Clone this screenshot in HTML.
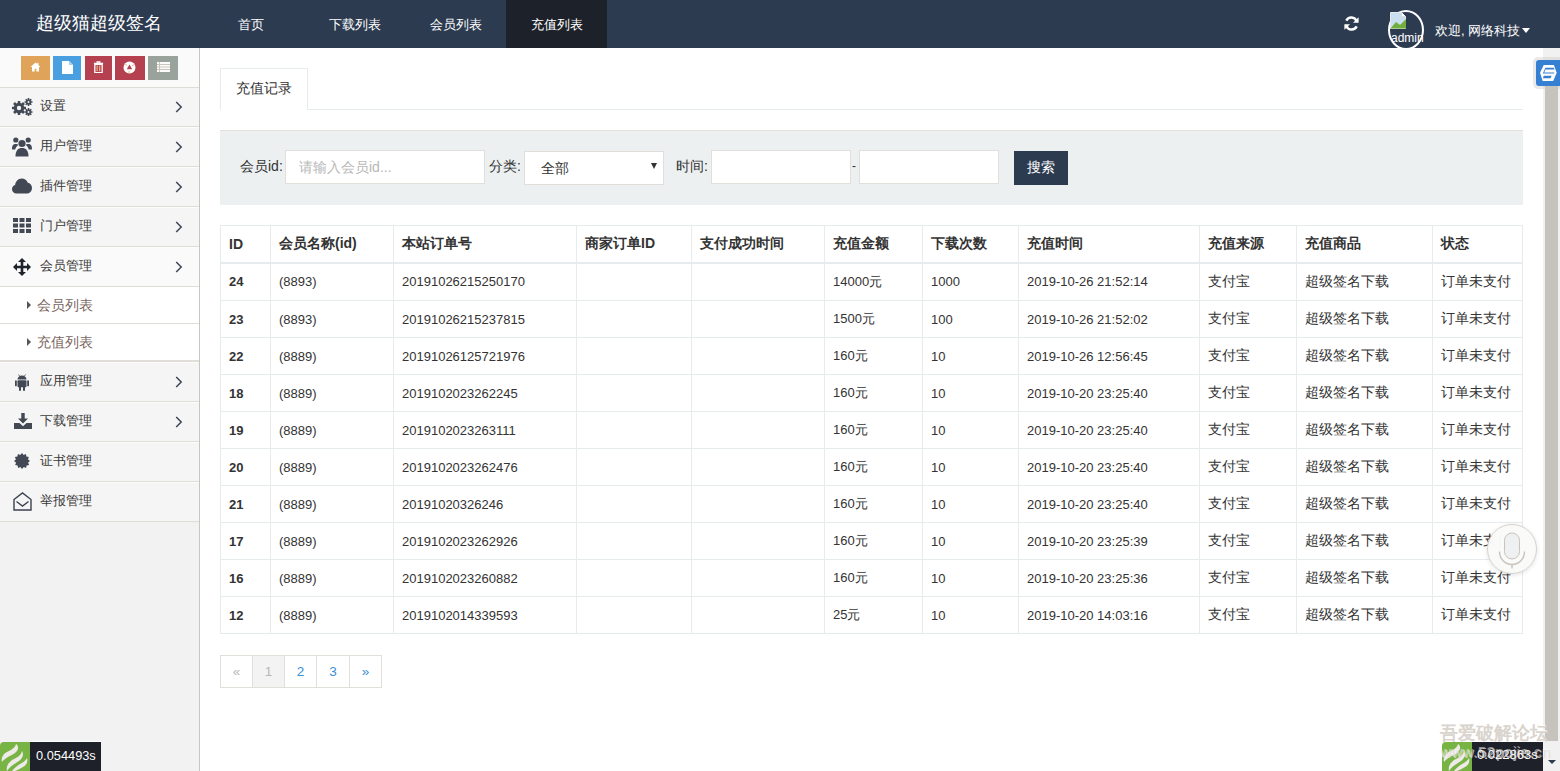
<!DOCTYPE html>
<html><head><meta charset="utf-8">
<style>
*{box-sizing:border-box;margin:0;padding:0}
html,body{width:1560px;height:771px;overflow:hidden;background:#fff;font-family:"Liberation Sans",sans-serif;color:#333;font-size:14px}
.abs{position:absolute}
#hd{position:absolute;left:0;top:0;width:1560px;height:48px;background:#2d3b51;color:#fff}
#hd .logo{position:absolute;left:36px;top:10px;font-size:18px;line-height:26px;white-space:nowrap}
#hd .nav{position:absolute;top:0;height:48px;line-height:50px;overflow:hidden;font-size:13px;white-space:nowrap}
#hd .act{background:#1d2129}
#sb{position:absolute;left:0;top:48px;width:200px;height:723px;background:#f2f2f2;border-right:1px solid #c9c5bf}
#short{position:absolute;left:0;top:0;width:199px;height:40px;background:#fafafa;border-bottom:1px solid #e0ddd8;z-index:2}
.sbtn{position:absolute;top:8px;height:24px}
.mi{position:absolute;left:0;width:199px;height:40px;border-top:1px solid #fcfcfc;border-bottom:1px solid #e0ddd8;background:#f5f5f5}
.mi .t{position:absolute;left:40px;top:1px;line-height:34px;font-size:13px;color:#393939;white-space:nowrap}
.mi .ar{position:absolute;left:175px;top:13px}
.mi svg.ic{position:absolute}
.sub{position:absolute;left:0;width:199px;height:37px;border-bottom:1px solid #e0ddd8;background:#fff}
.sub .t{position:absolute;left:37px;top:0px;line-height:36px;font-size:14px;color:#7a6660;white-space:nowrap}
.sub .tri{position:absolute;left:27px;top:14px;width:0;height:0;border-left:4px solid #555;border-top:4px solid transparent;border-bottom:4px solid transparent}
#ct{position:absolute;left:200px;top:48px;width:1343px;height:723px;background:#fff}
#scr{position:absolute;left:1543px;top:48px;width:17px;height:723px;background:#f1f1f1}
#thumb{position:absolute;left:2px;top:17px;width:13px;height:676px;background:#c6c3be}
table{border-collapse:collapse;position:absolute;left:220px;top:225px;table-layout:fixed}
td,th{border:1px solid #e6ecee;padding:0 8px;height:37px;text-align:left;white-space:nowrap;font-size:13px;color:#333}
th{font-weight:bold;height:37px;border-bottom:2px solid #e6ecee;font-size:14px}
td.c{font-size:14px}
td.b{font-weight:bold}
.lbl{font-size:14px;line-height:20px;color:#333;white-space:nowrap}
.inp{background:#fff;border:1px solid #e2ded9}
.pg{position:absolute;top:655px;height:33px;border:1px solid #e2ded9;font-size:13.5px;line-height:31px;text-align:center;color:#3a8fd6;background:#fff}
</style></head><body>
<div id="hd">
  <div class="logo">超级猫超级签名</div>
  <div class="nav" style="left:212px;width:77px;text-align:center">首页</div>
  <div class="nav" style="left:304px;width:102px;text-align:center">下载列表</div>
  <div class="nav" style="left:405px;width:101px;text-align:center">会员列表</div>
  <div class="nav act" style="left:506px;width:101px;text-align:center">充值列表</div>

  <svg class="abs" style="left:1344px;top:16px" width="15" height="15" viewBox="0 0 15 15"><path d="M12.6 5.2A5.6 5.6 0 0 0 2.3 4.6" fill="none" stroke="#fff" stroke-width="2.4"/><path d="M14.6 1.2v5.6H9z" fill="#fff"/><path d="M2.4 9.8A5.6 5.6 0 0 0 12.7 10.4" fill="none" stroke="#fff" stroke-width="2.4"/><path d="M0.4 13.8V8.2H6z" fill="#fff"/></svg>
  <div class="abs" style="left:1388px;top:10px;width:36px;height:40px;border:2px solid #fff;border-radius:50%;overflow:hidden"></div>
  <svg class="abs" style="left:1390px;top:12px" width="17" height="17" viewBox="0 0 17 17"><path d="M0.5 0.5h11l4 4v12h-15z" fill="#c9dff0" stroke="#e8e8e8"/><path d="M0.5 16.5L6 10l4 3 6-6v9.5z" fill="#6fae3c"/><path d="M11.5 0.5v4h4" fill="#fff" stroke="#ddd"/></svg>
  <div class="abs" style="left:1391px;top:30px;width:33px;overflow:hidden;font-size:12px;line-height:16px;color:#fff;white-space:nowrap">admin</div>
  <div class="abs" style="left:1435px;top:21px;font-size:13px;line-height:20px;color:#fff;white-space:nowrap">欢迎, 网络科技</div>
  <div class="abs" style="left:1522px;top:28px;width:0;height:0;border-left:4px solid transparent;border-right:4px solid transparent;border-top:5px solid #fff"></div>
</div>
<div id="sb">
  <div id="short">
    <div class="sbtn" style="left:21px;width:29px;background:#e0a35a"></div>
    <div class="sbtn" style="left:53px;width:28px;background:#4a9fe0"></div>
    <div class="sbtn" style="left:85px;width:27px;background:#b5404f"></div>
    <div class="sbtn" style="left:115px;width:30px;background:#b5404f"></div>
    <div class="sbtn" style="left:148px;width:30px;background:#9aa39b"></div>

    <svg class="abs" style="left:30px;top:14px" width="11" height="10" viewBox="0 0 13 12"><path d="M6.5 0.5L0.5 6h1.8v5.5h3.2V8h2v3.5h3.2V6h1.8L10 3.7V1H8.5v1.3z" fill="#fff"/></svg>
    <svg class="abs" style="left:62px;top:13px" width="11" height="13" viewBox="0 0 11 13"><path d="M0 0h7l4 4v9H0z" fill="#fff"/><path d="M7 0v4h4" fill="#a8d0f0"/></svg>
    <svg class="abs" style="left:93px;top:13px" width="11" height="12" viewBox="0 0 11 13"><path d="M0.5 2.5h10M4 2.5V1h3v1.5" fill="none" stroke="#fff" stroke-width="1.3"/><path d="M1.5 3.5h8v9h-8z" fill="none" stroke="#fff" stroke-width="1.4"/><path d="M4 5v6M6.8 5v6" stroke="#e8c090" stroke-width="1.2"/></svg>
    <svg class="abs" style="left:123px;top:13px" width="13" height="13" viewBox="0 0 13 13"><circle cx="6.5" cy="6.5" r="6" fill="#fff"/><path d="M6.5 3.6L9.2 8.3H3.8z" fill="#b5404f"/><path d="M2 3l2 1.5M11 3.5L9 5M6 12.5V10" stroke="#e8b080" stroke-width="0.9"/></svg>
    <svg class="abs" style="left:157px;top:14px" width="13" height="10" viewBox="0 0 13 10"><rect x="0" y="0" width="13" height="10" fill="#fbfbfb"/><path d="M0 2.5h13M0 5h13M0 7.5h13M2.5 0v10" stroke="#c5bfb6" stroke-width="0.9"/></svg>
  </div>
<div class="mi" style="top:39px"><svg class="ic" style="left:12px;top:10px" width="21" height="18" viewBox="0 0 21 18"><g fill="#424854"><circle cx="7" cy="10" r="5.2"/><g stroke="#424854" stroke-width="2.6"><path d="M7 3v14M0 10h14M2 5l10 10M12 5L2 15"/></g><circle cx="16.5" cy="4" r="2.6"/><g stroke="#424854" stroke-width="1.6"><path d="M16.5 0v8M12.5 4h8M13.7 1.2l5.6 5.6M19.3 1.2l-5.6 5.6"/></g><circle cx="16.5" cy="14" r="2.6"/><g stroke="#424854" stroke-width="1.6"><path d="M16.5 10v8M12.5 14h8M13.7 11.2l5.6 5.6M19.3 11.2l-5.6 5.6"/></g></g><circle cx="7" cy="10" r="2.2" fill="#f2f2f2"/><circle cx="16.5" cy="4" r="1" fill="#f2f2f2"/><circle cx="16.5" cy="14" r="1" fill="#f2f2f2"/></svg><div class="t">设置</div><svg class="ar" width="8" height="12" viewBox="0 0 8 12"><path d="M1.2 1l5 5-5 5" fill="none" stroke="#3b4656" stroke-width="1.5"/></svg></div>
<div class="mi" style="top:79px"><svg class="ic" style="left:12px;top:9px" width="20" height="20" viewBox="0 0 20 20"><g fill="#424854"><circle cx="10" cy="6.5" r="3.6"/><path d="M3.5 19.5c0-6 2.5-8.5 6.5-8.5s6.5 2.5 6.5 8.5z"/><circle cx="3.8" cy="3" r="2.6"/><circle cx="16.2" cy="3" r="2.6"/><path d="M0 12.5c0-4 1-5.5 3.8-5.5 1.2 0 2 .4 2.6 1-1.6 1-2.8 2.6-3.2 4.5z"/><path d="M20 12.5c0-4-1-5.5-3.8-5.5-1.2 0-2 .4-2.6 1 1.6 1 2.8 2.6 3.2 4.5z"/></g></svg><div class="t">用户管理</div><svg class="ar" width="8" height="12" viewBox="0 0 8 12"><path d="M1.2 1l5 5-5 5" fill="none" stroke="#3b4656" stroke-width="1.5"/></svg></div>
<div class="mi" style="top:119px"><svg class="ic" style="left:12px;top:10px" width="20" height="16" viewBox="0 0 20 16"><path fill="#424854" d="M4.5 15.5C2 15.5 0 13.6 0 11.2c0-2 1.3-3.6 3.1-4.1C3.4 3.4 6.2 0.5 9.8 0.5c2.8 0 5.1 1.8 6 4.3 2.4 0.4 4.2 2.6 4.2 5.1 0 3.1-2.5 5.6-5.6 5.6z"/></svg><div class="t">插件管理</div><svg class="ar" width="8" height="12" viewBox="0 0 8 12"><path d="M1.2 1l5 5-5 5" fill="none" stroke="#3b4656" stroke-width="1.5"/></svg></div>
<div class="mi" style="top:159px"><svg class="ic" style="left:13px;top:10px" width="18" height="15" viewBox="0 0 18 15"><g fill="#424854"><rect x="0" y="0" width="5" height="4"/><rect x="6.5" y="0" width="5" height="4"/><rect x="13" y="0" width="5" height="4"/><rect x="0" y="5.5" width="5" height="4"/><rect x="6.5" y="5.5" width="5" height="4"/><rect x="13" y="5.5" width="5" height="4"/><rect x="0" y="11" width="5" height="4"/><rect x="6.5" y="11" width="5" height="4"/><rect x="13" y="11" width="5" height="4"/></g></svg><div class="t">门户管理</div><svg class="ar" width="8" height="12" viewBox="0 0 8 12"><path d="M1.2 1l5 5-5 5" fill="none" stroke="#3b4656" stroke-width="1.5"/></svg></div>
<div class="mi" style="top:199px;background:#fafafa"><svg class="ic" style="left:13px;top:10px" width="18" height="18" viewBox="0 0 18 18"><g fill="#1f232b"><path d="M9 0l4 4H10.3v3.7H14V5l4 4-4 4v-2.7h-3.7V14H13l-4 4-4-4h2.7v-3.7H4V13L0 9l4-4v2.7h3.7V4H5z"/></g></svg><div class="t">会员管理</div><svg class="ar" width="8" height="12" viewBox="0 0 8 12"><path d="M1.2 1l5 5-5 5" fill="none" stroke="#3b4656" stroke-width="1.5"/></svg></div>
<div class="sub" style="top:239px"><div class="tri"></div><div class="t">会员列表</div></div>
<div class="sub" style="top:276px"><div class="tri"></div><div class="t">充值列表</div></div>
<div class="mi" style="top:314px"><svg class="ic" style="left:15px;top:11px" width="14" height="17" viewBox="0 0 14 17"><g fill="#424854"><path d="M2.5 5.5a4.5 4 0 0 1 9 0z"/><rect x="2.5" y="6.3" width="9" height="7" rx="1"/><rect x="0" y="6.3" width="1.8" height="6" rx=".9"/><rect x="12.2" y="6.3" width="1.8" height="6" rx=".9"/><rect x="4" y="12" width="2" height="5" rx="1"/><rect x="8" y="12" width="2" height="5" rx="1"/><path d="M3.5 0.5l1.5 2.2M10.5 0.5L9 2.7" stroke="#424854" stroke-width=".8"/></g></svg><div class="t">应用管理</div><svg class="ar" width="8" height="12" viewBox="0 0 8 12"><path d="M1.2 1l5 5-5 5" fill="none" stroke="#3b4656" stroke-width="1.5"/></svg></div>
<div class="mi" style="top:354px"><svg class="ic" style="left:14px;top:10px" width="18" height="16" viewBox="0 0 18 16"><g fill="#424854"><path d="M7.3 0h3.4v5.5H14L9 10.5 4 5.5h3.3z"/><path d="M0 10h5.5L9 13.2 12.5 10H18v6H0z"/></g></svg><div class="t">下载管理</div><svg class="ar" width="8" height="12" viewBox="0 0 8 12"><path d="M1.2 1l5 5-5 5" fill="none" stroke="#3b4656" stroke-width="1.5"/></svg></div>
<div class="mi" style="top:394px"><svg class="ic" style="left:14px;top:10px" width="16" height="16" viewBox="0 0 16 16"><path fill="#424854" d="M8 0l1.6 1.9 2.3-1 .5 2.5 2.5.5-1 2.3L16 8l-1.9 1.6 1 2.3-2.5.5-.5 2.5-2.3-1L8 16l-1.6-1.9-2.3 1-.5-2.5-2.5-.5 1-2.3L0 8l1.9-1.6-1-2.3 2.5-.5.5-2.5 2.3 1z"/></svg><div class="t">证书管理</div></div>
<div class="mi" style="top:434px"><svg class="ic" style="left:13px;top:9px" width="19" height="19" viewBox="0 0 19 19"><g fill="none" stroke="#3a4150" stroke-width="1.4"><path d="M1 7.5L9.5 0.9 18 7.5V18H1z"/><path d="M3.5 9.5l6 4.5 6-4.5"/></g></svg><div class="t">举报管理</div></div>
<div class="abs" style="left:0;top:313px;width:199px;height:1px;background:#e0ddd8"></div>
</div>
<div id="ct"></div>

<div class="abs" style="left:220px;top:109px;width:1303px;height:1px;background:#e6ecee"></div>
<div class="abs" style="left:220px;top:68px;width:88px;height:42px;border:1px solid #e6ecee;border-bottom:none;background:#fff"></div>
<div class="abs" style="left:236px;top:78px;font-size:14px;line-height:20px;color:#333;white-space:nowrap">充值记录</div>
<div class="abs" style="left:220px;top:130px;width:1303px;height:75px;background:#ecf0f1;border-top:1px solid #e4e1dc"></div>
<div class="abs lbl" style="left:240px;top:156px">会员id:</div>
<div class="abs inp" style="left:285px;top:150px;width:200px;height:34px"></div>
<div class="abs" style="left:299px;top:157px;font-size:14px;line-height:20px;color:#b8b8b8;white-space:nowrap">请输入会员id...</div>
<div class="abs lbl" style="left:489px;top:156px">分类:</div>
<div class="abs inp" style="left:524px;top:151px;width:140px;height:34px"></div>
<div class="abs" style="left:541px;top:158px;font-size:14px;line-height:20px;color:#333;white-space:nowrap">全部</div>
<div class="abs" style="left:651px;top:163px;width:0;height:0;border-left:3px solid transparent;border-right:3px solid transparent;border-top:6px solid #333"></div>
<div class="abs lbl" style="left:676px;top:156px">时间:</div>
<div class="abs inp" style="left:711px;top:150px;width:140px;height:34px"></div>
<div class="abs" style="left:852px;top:156px;font-size:12px;line-height:20px;color:#333">-</div>
<div class="abs inp" style="left:859px;top:150px;width:140px;height:34px"></div>
<div class="abs" style="left:1014px;top:151px;width:54px;height:34px;background:#2d3b51;color:#fff;font-size:14px;line-height:32px;text-align:center">搜索</div>
<table><colgroup><col style="width:50px"><col style="width:123px"><col style="width:183px"><col style="width:115px"><col style="width:133px"><col style="width:98px"><col style="width:96px"><col style="width:181px"><col style="width:97px"><col style="width:136px"><col style="width:90px"></colgroup>
<tr><th>ID</th><th>会员名称(id)</th><th>本站订单号</th><th>商家订单ID</th><th>支付成功时间</th><th>充值金额</th><th>下载次数</th><th>充值时间</th><th>充值来源</th><th>充值商品</th><th>状态</th></tr>
<tr style="height:38px"><td class="b" style="height:38px">24</td><td>(8893)</td><td>20191026215250170</td><td></td><td></td><td>14000元</td><td>1000</td><td>2019-10-26 21:52:14</td><td class="c">支付宝</td><td class="c">超级签名下载</td><td class="c">订单未支付</td></tr>
<tr><td class="b">23</td><td>(8893)</td><td>20191026215237815</td><td></td><td></td><td>1500元</td><td>100</td><td>2019-10-26 21:52:02</td><td class="c">支付宝</td><td class="c">超级签名下载</td><td class="c">订单未支付</td></tr>
<tr><td class="b">22</td><td>(8889)</td><td>20191026125721976</td><td></td><td></td><td>160元</td><td>10</td><td>2019-10-26 12:56:45</td><td class="c">支付宝</td><td class="c">超级签名下载</td><td class="c">订单未支付</td></tr>
<tr><td class="b">18</td><td>(8889)</td><td>2019102023262245</td><td></td><td></td><td>160元</td><td>10</td><td>2019-10-20 23:25:40</td><td class="c">支付宝</td><td class="c">超级签名下载</td><td class="c">订单未支付</td></tr>
<tr><td class="b">19</td><td>(8889)</td><td>2019102023263111</td><td></td><td></td><td>160元</td><td>10</td><td>2019-10-20 23:25:40</td><td class="c">支付宝</td><td class="c">超级签名下载</td><td class="c">订单未支付</td></tr>
<tr><td class="b">20</td><td>(8889)</td><td>2019102023262476</td><td></td><td></td><td>160元</td><td>10</td><td>2019-10-20 23:25:40</td><td class="c">支付宝</td><td class="c">超级签名下载</td><td class="c">订单未支付</td></tr>
<tr><td class="b">21</td><td>(8889)</td><td>20191020326246</td><td></td><td></td><td>160元</td><td>10</td><td>2019-10-20 23:25:40</td><td class="c">支付宝</td><td class="c">超级签名下载</td><td class="c">订单未支付</td></tr>
<tr><td class="b">17</td><td>(8889)</td><td>2019102023262926</td><td></td><td></td><td>160元</td><td>10</td><td>2019-10-20 23:25:39</td><td class="c">支付宝</td><td class="c">超级签名下载</td><td class="c">订单未支付</td></tr>
<tr><td class="b">16</td><td>(8889)</td><td>2019102023260882</td><td></td><td></td><td>160元</td><td>10</td><td>2019-10-20 23:25:36</td><td class="c">支付宝</td><td class="c">超级签名下载</td><td class="c">订单未支付</td></tr>
<tr><td class="b">12</td><td>(8889)</td><td>2019102014339593</td><td></td><td></td><td>25元</td><td>10</td><td>2019-10-20 14:03:16</td><td class="c">支付宝</td><td class="c">超级签名下载</td><td class="c">订单未支付</td></tr>
</table>
<div class="pg" style="left:220px;width:33px;color:#b8b8b8">«</div>
<div class="pg" style="left:252px;width:33px;color:#b8b8b8;background:#f3f3f3">1</div>
<div class="pg" style="left:284px;width:33px">2</div>
<div class="pg" style="left:316px;width:34px">3</div>
<div class="pg" style="left:349px;width:33px">»</div>

<div id="scr"><div id="thumb"></div></div>

<div class="abs" style="left:1533px;top:57px;width:30px;height:32px;border-radius:5px;background:rgba(200,195,188,0.35)"></div>
<svg class="abs" style="left:1536px;top:60px" width="24" height="26" viewBox="0 0 24 26"><rect x="0" y="0" width="30" height="26" rx="3" fill="#3580d2"/><path d="M7.75 5H17.9L20.7 12.8 17.2 20.9H6.7L4 12.8z" fill="#fff"/><path d="M9.4 7.7H17.8L18.6 9.6H9.4L8.2 12.4H18.4L18 13.4H6.8z" fill="#3580d2"/><path d="M7.8 15.8H15.6L14.6 18.2H6.9z" fill="#3580d2"/></svg>
<div class="abs" style="left:1487px;top:524px;width:50px;height:50px;border-radius:50%;background:rgba(250,250,249,0.98);border:1px solid #d6d2cc;box-shadow:0 1px 4px rgba(0,0,0,0.12)"></div>
<svg class="abs" style="left:1497px;top:532px" width="30" height="38" viewBox="0 0 30 38"><rect x="7.5" y="1" width="15" height="26" rx="7.5" fill="#eef0f1" stroke="#c8c3bc" stroke-width="1"/><path d="M2.5 19.5c0 7.5 5.5 13 12.5 13s12.5-5.5 12.5-13" fill="none" stroke="#c8c3bc" stroke-width="1.4"/><path d="M15 32.5v4" stroke="#c8c3bc" stroke-width="1.4"/></svg>
<div class="abs" style="left:0;top:742px;width:31px;height:29px;background:#78b443;border-top-left-radius:4px"></div>
<svg class="abs" style="left:0;top:744px" width="30" height="27" viewBox="0 0 30 27"><g fill="#eeeae8"><path d="M16 0c3 2 3 6-1 9-4 3-9 4-13 9-1-4 1-8 5-10 4-2 8-4 9-8z"/><path d="M22 7c2 3 1 7-3 10-4 3-8 4-12 10-1-4 1-8 5-11 4-2 9-4 10-9z"/><path d="M27 14c1 3 0 7-4 9-3 2-6 3-8 4h-3c2-3 5-5 8-7 4-2 6-4 7-6z"/></g></svg>
<div class="abs" style="left:30px;top:741px;width:71px;height:30px;background:#1e2129;border-top:1px solid #fff"></div>
<div class="abs" style="left:36px;top:746px;font-size:12.8px;line-height:20px;color:#fff;white-space:nowrap">0.054493s</div>
<div class="abs" style="left:1442px;top:742px;width:31px;height:29px;background:#78b443;border-top-left-radius:4px"></div>
<svg class="abs" style="left:1442px;top:744px" width="30" height="27" viewBox="0 0 30 27"><g fill="#eeeae8"><path d="M16 0c3 2 3 6-1 9-4 3-9 4-13 9-1-4 1-8 5-10 4-2 8-4 9-8z"/><path d="M22 7c2 3 1 7-3 10-4 3-8 4-12 10-1-4 1-8 5-11 4-2 9-4 10-9z"/><path d="M27 14c1 3 0 7-4 9-3 2-6 3-8 4h-3c2-3 5-5 8-7 4-2 6-4 7-6z"/></g></svg>
<div class="abs" style="left:1472px;top:741px;width:71px;height:30px;background:#1e2129;border-top:1px solid #fff"></div>
<div class="abs" style="left:1477px;top:745px;font-size:13px;line-height:20px;color:#fff;white-space:nowrap">0.022863s</div>
<div class="abs" style="left:1548px;top:760px;width:0;height:0;border-left:4px solid transparent;border-right:4px solid transparent;border-top:4px solid #2d3b51"></div>
<div class="abs" style="left:1440px;top:721px;font-size:18px;line-height:24px;color:#d9d4cd;font-weight:bold;letter-spacing:0px;text-shadow:-1px -1px 0 rgba(255,255,255,.95);white-space:nowrap">吾爱破解论坛</div>
<div class="abs" style="left:1441px;top:743px;font-size:15px;line-height:20px;color:rgba(225,220,213,.75);letter-spacing:0.45px;text-shadow:-1px -1px 0 rgba(255,255,255,.5);white-space:nowrap">www.52pojie.cn</div>
</body></html>
